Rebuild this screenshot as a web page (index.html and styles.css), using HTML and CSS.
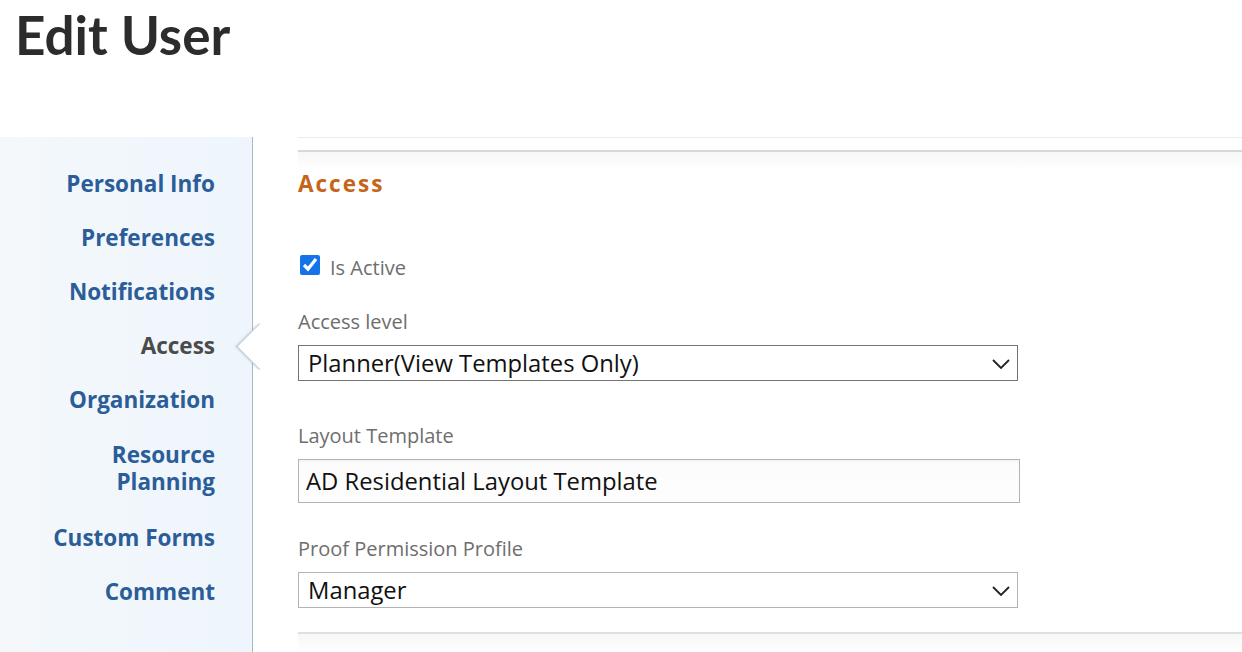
FILE: index.html
```html
<!DOCTYPE html>
<html lang="en">
<head>
  <meta charset="UTF-8">
  <title>Edit User</title>
  <link rel="stylesheet" href="styles.css">
</head>
<body>
  <header class="page-header">
    <h1>Edit User</h1>
  </header>

  <div class="layout">
    <nav class="side-nav">
      <a href="#">Personal Info</a>
      <a href="#">Preferences</a>
      <a href="#">Notifications</a>
      <a href="#" class="active">Access</a>
      <a href="#">Organization</a>
      <a href="#" class="multi">Resource<br>Planning</a>
      <a href="#">Custom Forms</a>
      <a href="#">Comment</a>
    </nav>

    <main class="content">
      <div class="top-rule"></div>
      <section class="panel">
        <h2 class="panel-title">Access</h2>

        <label class="check-row">
          <input type="checkbox" checked>
          <span>Is Active</span>
        </label>

        <div class="field">
          <label class="field-label">Access level</label>
          <div class="select-wrap">
            <select class="select dark">
              <option>Planner(View Templates Only)</option>
            </select>
            <svg class="chevron" width="18" height="10" viewBox="0 0 18 10"><path d="M1 1 L9 9 L17 1" fill="none" stroke="#222" stroke-width="1.8"/></svg>
          </div>
        </div>

        <div class="field">
          <label class="field-label">Layout Template</label>
          <input class="text-input" type="text" value="AD Residential Layout Template">
        </div>

        <div class="field">
          <label class="field-label">Proof Permission Profile</label>
          <div class="select-wrap">
            <select class="select">
              <option>Manager</option>
            </select>
            <svg class="chevron" width="18" height="10" viewBox="0 0 18 10"><path d="M1 1 L9 9 L17 1" fill="none" stroke="#222" stroke-width="1.8"/></svg>
          </div>
        </div>
      </section>
      <div class="bottom-rule"></div>
    </main>
  </div>
</body>
</html>
```

FILE: styles.css
```css
body {
  margin: 0;
  font-family: "Open Sans", Arial, sans-serif;
  background: #fff;
  overflow: hidden;
}
.page-header {
  height: 137px;
  padding-left: 15px;
  box-sizing: border-box;
}
.page-header h1 {
  margin: 0;
  padding-top: 2px;
  font-family: Lato, "Open Sans", sans-serif;
  font-weight: 700;
  font-size: 53px;
  line-height: 66px;
  color: #2c2c2c;
}
.layout {
  display: flex;
  height: 515px;
}
.side-nav {
  width: 253px;
  box-sizing: border-box;
  background: linear-gradient(to right, #f4f8fb, #eef5fc);
  border-right: 1px solid #a8b8c8;
  padding: 33px 37px 0 0;
  display: flex;
  flex-direction: column;
  align-items: flex-end;
  gap: 27px;
}
.side-nav a {
  position: relative;
  display: block;
  text-align: right;
  text-decoration: none;
  font-weight: 700;
  font-size: 22.5px;
  line-height: 27px;
  color: #2b5d98;
}
.side-nav a.multi {
  margin-top: 1px;
  margin-bottom: 2px;
}
.side-nav a.active {
  color: #4b4b4b;
}
.side-nav a.active::after {
  content: "";
  position: absolute;
  top: 50%;
  left: calc(100% + 28px);
  width: 32px;
  height: 32px;
  margin-top: -16px;
  background: #fff;
  border-left: 1px solid #b9c6d3;
  border-bottom: 1px solid #b9c6d3;
  box-shadow: -1px 1px 2px rgba(120, 140, 160, 0.25);
  transform: rotate(45deg);
}
.content {
  flex: 1;
  padding-left: 45px;
  position: relative;
  z-index: 1;
}
.top-rule {
  height: 12px;
  border-top: 1px solid #ebebeb;
  border-bottom: 2px solid #d8d8d8;
}
.panel {
  background: linear-gradient(#f7f7f7, #fff 18px);
  padding-top: 17px;
}
.panel-title {
  margin: 0;
  font-size: 22.5px;
  line-height: 30px;
  font-weight: 700;
  letter-spacing: 2px;
  color: #c4651b;
}
.check-row {
  display: flex;
  align-items: center;
  gap: 10px;
  margin-top: 54px;
  height: 24px;
  font-size: 20px;
  color: #6e6e6e;
}
.check-row input {
  width: 20px;
  height: 20px;
  margin: 0 0 0 2px;
  accent-color: #1473e6;
}
.check-row span {
  padding-top: 5px;
}
.field {
  margin-top: 33px;
}
.field + .field {
  margin-top: 43px;
}
.field + .field + .field {
  margin-top: 34px;
}
.field-label {
  display: block;
  font-size: 20px;
  line-height: 24px;
  color: #6e6e6e;
  margin-bottom: 11px;
}
.select-wrap {
  position: relative;
  width: 720px;
}
.select {
  appearance: none;
  display: block;
  width: 720px;
  height: 36px;
  padding: 0 40px 0 9px;
  border: 1px solid #b3b3b3;
  border-radius: 0;
  background: #fff;
  font-family: "Open Sans", Arial, sans-serif;
  font-size: 23.8px;
  color: #111;
}
.select.dark {
  border-color: #747474;
}
.chevron {
  position: absolute;
  right: 8px;
  top: 14px;
  pointer-events: none;
}
.text-input {
  display: block;
  box-sizing: border-box;
  width: 722px;
  height: 44px;
  padding: 0 7px;
  border: 1px solid #b3b3b3;
  border-radius: 0;
  background: linear-gradient(#f1f1f1, #fcfcfc 3px, #fdfdfd);
  font-family: "Open Sans", Arial, sans-serif;
  font-size: 23.8px;
  color: #111;
}
.bottom-rule {
  margin-top: 24px;
  height: 20px;
  border-top: 2px solid #e0e0e0;
  background: linear-gradient(#f7f7f7, #fff);
}
```
